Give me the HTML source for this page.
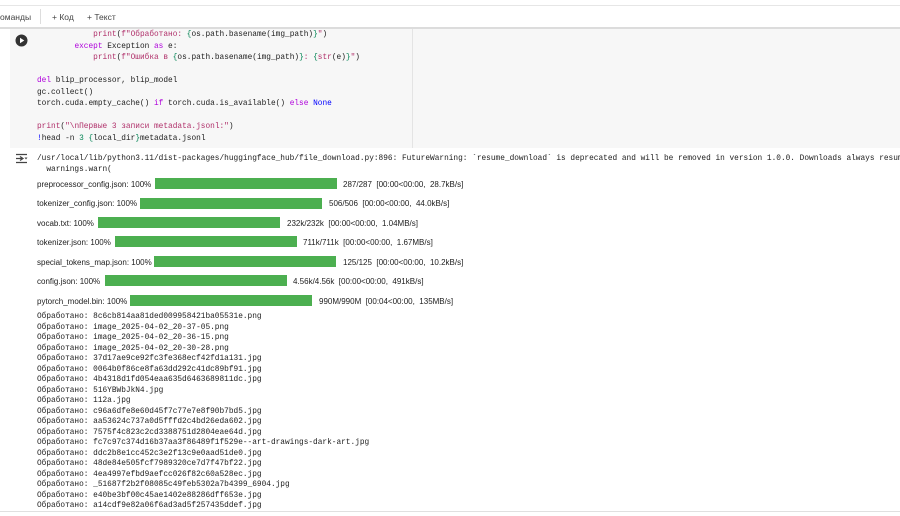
<!DOCTYPE html>
<html><head><meta charset="utf-8"><style>
*{margin:0;padding:0;box-sizing:border-box}
body{width:900px;height:516px;overflow:hidden;background:#fff;position:relative;font-family:"Liberation Sans",sans-serif}
.abs{position:absolute;white-space:pre}
.m{font-family:"Liberation Mono","DejaVu Sans Mono",monospace;font-size:7.8px;color:#212121}
.k{color:#af00db}.s{color:#b0306a}.b{color:#0000ff}.f{color:#b0306a}.br{color:#098658}
.lbl{font-size:8px;color:#212121}
.bar{position:absolute;height:11px;width:182px;background:#4caf50}
</style></head><body>
<div class="abs" style="left:0;top:5px;width:900px;height:1px;background:#e6e6e6"></div>
<div class="abs" style="left:0;top:6px;width:900px;height:21px;background:#fff"></div>
<div class="abs" style="left:0;top:27px;width:900px;height:2px;background:#dcdcdc"></div>
<div class="abs" style="left:0;top:12px;font-size:8.5px;color:#444">оманды</div>
<div class="abs" style="left:40px;top:9px;width:1px;height:15px;background:#ddd"></div>
<div class="abs" style="left:52px;top:12px;font-size:8.5px;color:#444">+ Код</div>
<div class="abs" style="left:87px;top:12px;font-size:8.5px;color:#444">+ Текст</div>

<div class="abs" style="left:10px;top:29px;width:890px;height:119px;background:#f7f7f7"></div>
<div class="abs" style="left:412px;top:29px;width:1px;height:119px;background:#e4e4e4"></div>
<svg class="abs" style="left:15px;top:34px" width="13" height="13"><circle cx="6.5" cy="6.5" r="6" fill="#333"/><path d="M5 3.8L9.3 6.5L5 9.2Z" fill="#fff"/></svg>

<div class="abs m" style="left:37px;top:30px;line-height:11.5px">            <span class="f">print</span>(<span class="s">f"Обработано: </span><span class="br">{</span>os.path.basename(img_path)<span class="br">}</span><span class="s">"</span>)
        <span class="k">except</span> Exception <span class="k">as</span> e:
            <span class="f">print</span>(<span class="s">f"Ошибка в </span><span class="br">{</span>os.path.basename(img_path)<span class="br">}</span><span class="s">: </span><span class="br">{</span><span class="f">str</span>(e)<span class="br">}</span><span class="s">"</span>)

<span class="k">del</span> blip_processor, blip_model
gc.collect()
torch.cuda.empty_cache() <span class="k">if</span> torch.cuda.is_available() <span class="k">else</span> <span class="b">None</span>

<span class="f">print</span>(<span class="s">"\nПервые 3 записи metadata.jsonl:"</span>)
<span class="b">!</span>head -n <span style="color:#098658">3</span> <span class="br">{</span>local_dir<span class="br">}</span>metadata.jsonl</div>

<svg class="abs" style="left:15px;top:153px" width="14" height="11"><path d="M1 1.5H12M1 5.5H8M1 9.5H12M5 3.5L8 5.5L5 7.5" stroke="#444" stroke-width="1.2" fill="none"/><path d="M9.5 4.5L11 6.5L12.5 4.5Z" fill="#444"/></svg>
<div class="abs m" style="left:37px;top:154px;line-height:11px">/usr/local/lib/python3.11/dist-packages/huggingface_hub/file_download.py:896: FutureWarning: `resume_download` is deprecated and will be removed in version 1.0.0. Downloads always resume
  warnings.warn(</div>

<div class="abs lbl" style="left:37px;top:180px">preprocessor_config.json: 100%</div><div class="bar" style="left:155px;top:178px"></div><div class="abs lbl" style="left:343px;top:180px">287/287  [00:00&lt;00:00,  28.7kB/s]</div>
<div class="abs lbl" style="left:37px;top:199px">tokenizer_config.json: 100%</div><div class="bar" style="left:140px;top:198px"></div><div class="abs lbl" style="left:329px;top:199px">506/506  [00:00&lt;00:00,  44.0kB/s]</div>
<div class="abs lbl" style="left:37px;top:219px">vocab.txt: 100%</div><div class="bar" style="left:98px;top:217px"></div><div class="abs lbl" style="left:287px;top:219px">232k/232k  [00:00&lt;00:00,  1.04MB/s]</div>
<div class="abs lbl" style="left:37px;top:238px">tokenizer.json: 100%</div><div class="bar" style="left:115px;top:236px"></div><div class="abs lbl" style="left:303px;top:238px">711k/711k  [00:00&lt;00:00,  1.67MB/s]</div>
<div class="abs lbl" style="left:37px;top:258px">special_tokens_map.json: 100%</div><div class="bar" style="left:154px;top:256px"></div><div class="abs lbl" style="left:343px;top:258px">125/125  [00:00&lt;00:00,  10.2kB/s]</div>
<div class="abs lbl" style="left:37px;top:277px">config.json: 100%</div><div class="bar" style="left:105px;top:275px"></div><div class="abs lbl" style="left:293px;top:277px">4.56k/4.56k  [00:00&lt;00:00,  491kB/s]</div>
<div class="abs lbl" style="left:37px;top:297px">pytorch_model.bin: 100%</div><div class="bar" style="left:130px;top:295px"></div><div class="abs lbl" style="left:319px;top:297px">990M/990M  [00:04&lt;00:00,  135MB/s]</div>

<div class="abs m" style="left:37px;top:312px;line-height:10.5px">Обработано: 8c6cb814aa81ded009958421ba05531e.png
Обработано: image_2025-04-02_20-37-05.png
Обработано: image_2025-04-02_20-36-15.png
Обработано: image_2025-04-02_20-30-28.png
Обработано: 37d17ae9ce92fc3fe368ecf42fd1a131.jpg
Обработано: 0064b0f86ce8fa63dd292c41dc89bf91.jpg
Обработано: 4b4318d1fd054eaa635d6463689811dc.jpg
Обработано: 516YBWbJkN4.jpg
Обработано: 112a.jpg
Обработано: c96a6dfe8e60d45f7c77e7e8f90b7bd5.jpg
Обработано: aa53624c737a0d5fffd2c4bd26eda602.jpg
Обработано: 7575f4c823c2cd3388751d2804eae64d.jpg
Обработано: fc7c97c374d16b37aa3f86489f1f529e--art-drawings-dark-art.jpg
Обработано: ddc2b8e1cc452c3e2f13c9e0aad51de0.jpg
Обработано: 48de84e505fcf7989320ce7d7f47bf22.jpg
Обработано: 4ea4997efbd9aefcc026f82c60a528ec.jpg
Обработано: _51687f2b2f08085c49feb5302a7b4399_6904.jpg
Обработано: e40be3bf00c45ae1402e88286dff653e.jpg
Обработано: a14cdf9e82a06f6ad3ad5f257435ddef.jpg</div>
<div class="abs" style="left:0;top:511px;width:900px;height:1px;background:#e0e0e0"></div>
</body></html>
